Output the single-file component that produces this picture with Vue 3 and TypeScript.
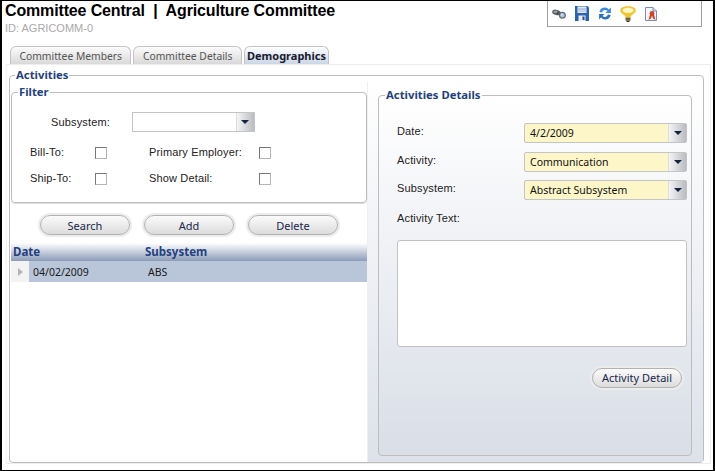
<template>
  <div class="window">
    <header class="header">
      <div class="titles">
        <h1>Committee Central&nbsp; |&nbsp; Agriculture Committee</h1>
        <p class="record-id">ID: AGRICOMM-0</p>
      </div>
      <div class="toolbar">
        <svg width="14" height="10" viewBox="0 0 14 10">
          <ellipse cx="4.5" cy="3.4" rx="4.4" ry="2.6" transform="rotate(14 4.5 3.4)" fill="#5c6066" />
          <ellipse cx="3.4" cy="2.8" rx="2" ry="1.1" fill="#a0a4aa" />
          <rect x="5" y="3.5" width="4" height="2.5" fill="#4c5056" />
          <circle cx="10.4" cy="6.2" r="3.5" fill="#666b71" />
          <circle cx="10.4" cy="6.2" r="2.2" fill="#a9c6e2" />
          <circle cx="9.8" cy="5.6" r="0.9" fill="#e0edf8" />
        </svg>
        <svg width="14" height="15" viewBox="0 0 14 15">
          <path d="M0 0 H12.5 L14 1.5 V15 H0 Z" fill="#2b62b4" />
          <rect x="2.5" y="0.5" width="9" height="6.5" fill="#e3e9f4" />
          <rect x="2.5" y="2.5" width="9" height="1" fill="#8da8d0" />
          <rect x="2.5" y="4.5" width="9" height="1" fill="#a8bcdc" />
          <rect x="3.5" y="9.5" width="7" height="5.5" fill="#e9edf2" />
          <rect x="7.5" y="10.5" width="2" height="3.5" fill="#2b4c80" />
        </svg>
        <svg width="14" height="15" viewBox="0 0 15 15">
          <path d="M1.5 6 A5.8 5.8 0 0 1 11.7 3.2 L13.8 1.2 V7 H8 L10.2 4.8 A3.4 3.4 0 0 0 4.4 6.4 Z" fill="#3b8ae0" />
          <path d="M13.5 9 A5.8 5.8 0 0 1 3.3 11.8 L1.2 13.8 V8 H7 L4.8 10.2 A3.4 3.4 0 0 0 10.6 8.6 Z" fill="#2a6fc4" />
        </svg>
        <svg width="16" height="16" viewBox="0 0 16 16">
          <path d="M8 0.3 C12.8 0.3 15.8 2 15.8 4.8 C15.8 7.6 10.8 8.6 10.4 11.5 H5.6 C5.2 8.6 0.2 7.6 0.2 4.8 C0.2 2 3.2 0.3 8 0.3 Z" fill="#f3c62b" />
          <ellipse cx="8" cy="4.4" rx="5.4" ry="2.6" fill="#fdf8cc" />
          <rect x="5.5" y="11.5" width="5" height="3.2" fill="#77653f" />
          <rect x="6.5" y="14.7" width="3" height="1.3" fill="#3d3424" />
        </svg>
        <svg width="12" height="14" viewBox="0 0 12 14">
          <path d="M0.5 0.5 H8 L11.5 4 V13.5 H0.5 Z" fill="#f4f6fa" stroke="#7b8db0" />
          <path d="M8 0.5 V4 H11.5" fill="#cfd8e8" stroke="#7b8db0" />
          <circle cx="7" cy="6.4" r="2.4" fill="#d8402a" />
          <path d="M5 7.5 L3.5 13 L6 11.6 L7 8.5 L8 11.6 L10.5 13 L9 7.5 Z" fill="#d8402a" />
        </svg>
      </div>
    </header>

    <nav class="tabs">
      <span v-for="tab in tabs" :key="tab" class="tab" :class="{ active: tab === 'Demographics' }">{{ tab }}</span>
    </nav>

    <section class="panel">
      <fieldset class="group activities">
        <legend>Activities</legend>
        <div class="columns">
          <div class="left">
            <fieldset class="group filter">
              <legend>Filter</legend>
              <div class="filter-body">
                <div class="filter-subsystem">
                  <label>Subsystem:</label>
                  <div class="combo empty"><span class="combo-value"></span><span class="combo-btn"><i></i></span></div>
                </div>
                <div class="checks">
                  <label>Bill-To:</label><span class="check"></span>
                  <label>Primary Employer:</label><span class="check"></span>
                  <label>Ship-To:</label><span class="check"></span>
                  <label>Show Detail:</label><span class="check"></span>
                </div>
              </div>
            </fieldset>

            <div class="actions">
              <button v-for="action in actions" :key="action" class="pill">{{ action }}</button>
            </div>

            <div class="grid-head">
              <span class="col-date">Date</span>
              <span>Subsystem</span>
            </div>
            <div class="grid-row">
              <span class="row-marker"><i></i></span>
              <span class="cell-date">04/02/2009</span>
              <span class="cell-sub">ABS</span>
            </div>
          </div>

          <div class="right">
            <fieldset class="group details">
              <legend>Activities Details</legend>
              <div class="details-body">
                <div class="form-row" v-for="field in fields" :key="field.label">
                  <label>{{ field.label }}</label>
                  <div class="combo required"><span class="combo-value">{{ field.value }}</span><span class="combo-btn"><i></i></span></div>
                </div>
                <label class="text-label">Activity Text:</label>
                <div class="text-box"></div>
                <div class="detail-action">
                  <button class="pill">Activity Detail</button>
                </div>
              </div>
            </fieldset>
          </div>
        </div>
      </fieldset>
    </section>
  </div>
</template>

<script setup lang="ts">
const tabs: string[] = ["Committee Members", "Committee Details", "Demographics"]
const actions: string[] = ["Search", "Add", "Delete"]

const fields = [
  { label: "Date:", value: "4/2/2009" },
  { label: "Activity:", value: "Communication" },
  { label: "Subsystem:", value: "Abstract Subsystem" },
]
</script>

<style>
html,
body {
  margin: 0;
  background: #fff;
}
</style>

<style scoped>
.window {
  box-sizing: border-box;
  width: 715px;
  height: 471px;
  display: flex;
  flex-direction: column;
  background: #fff;
  border: solid #000;
  border-width: 1px 2px 1px 2px;
  font-family: "Liberation Sans", Arial, sans-serif;
  font-size: 11px;
  letter-spacing: 0.15px;
  color: #222;
  overflow: hidden;
}

.header {
  height: 45px;
  display: flex;
  justify-content: space-between;
  align-items: flex-start;
  padding: 0 11px 0 3px;
  flex: none;
}

h1 {
  margin: 0;
  font-size: 16px;
  line-height: 19px;
  font-weight: bold;
  letter-spacing: -0.15px;
  color: #000;
}

.record-id {
  margin: 1px 0 0;
  font-size: 11px;
  line-height: 14px;
  letter-spacing: 0;
  color: #a9a9a9;
}

.toolbar {
  box-sizing: border-box;
  width: 155px;
  height: 26px;
  display: flex;
  align-items: center;
  gap: 8.75px;
  padding: 0 0 0 4px;
  border: 1px solid #a0a0a0;
  border-top: none;
}

.tabs {
  display: flex;
  gap: 2px;
  padding-left: 8px;
  height: 18px;
  flex: none;
}

.tab {
  box-sizing: border-box;
  height: 18px;
  padding: 0 8.5px;
  display: flex;
  align-items: center;
  border: 1px solid #c4c4c4;
  border-bottom: none;
  border-radius: 6px 6px 0 0;
  background: linear-gradient(#fbfbfb, #d9d9d9);
  font-family: "Noto Sans", sans-serif;
  font-size: 10.3px;
  letter-spacing: 0;
  color: #555;
}

.tab.active {
  padding: 0 2px;
  background: linear-gradient(#fff, #cbd6e6);
  font-size: 11px;
  font-weight: bold;
  color: #1a1a2e;
}

.panel {
  flex: 1;
  min-height: 0;
  margin: 0 2px 6px 4px;
  padding: 3px 0 0 2px;
  border: 1px solid #eee;
  display: flex;
}

.group {
  margin: 0;
  min-width: 0;
  padding: 0;
  border: 1px solid #bdbdbd;
  border-radius: 4px;
}

.group legend {
  margin-left: 5px;
  padding: 0 1px;
  font-family: "Noto Sans", sans-serif;
  font-size: 11.3px;
  line-height: 14px;
  font-weight: bold;
  letter-spacing: 0;
  color: #24417f;
}

.group .filter > legend,
.group .details > legend {
  margin-left: 6px;
}

.activities {
  flex: 1;
  margin: 0 6px 0 0;
  min-height: 0;
}

.columns {
  height: 100%;
  display: flex;
}

.left {
  width: 356px;
  padding: 3px 0 0 1px;
  flex: none;
}

.right {
  flex: 1;
  padding: 6px 11px 6px 10px;
  background: linear-gradient(#fff, #dde1ea);
  display: flex;
  border-left: 1px solid #efefef;
}

.filter {
  height: 118px;
  box-sizing: border-box;
  box-shadow: 0 1px 0 #dedede;
}

.filter-body {
  padding: 13px 0 0 18px;
}

.filter-subsystem {
  display: flex;
  align-items: center;
  padding-left: 21px;
  gap: 22px;
}

.combo {
  box-sizing: border-box;
  display: flex;
  border: 1px solid #c4c4c4;
  background: #fff;
}

.combo.empty {
  width: 123px;
  height: 20px;
}

.combo.required {
  flex: 1;
  height: 20px;
  background: #fdf6c9;
  border-radius: 2px;
}

.combo-value {
  flex: 1;
  padding-left: 5px;
  line-height: 18px;
  font-family: "Noto Sans", sans-serif;
  font-size: 10.5px;
  letter-spacing: 0;
  color: #111;
}

.combo-btn {
  width: 17px;
  display: flex;
  align-items: center;
  justify-content: center;
  background: linear-gradient(90deg, #f4f4f4, #b9bcc2);
  border-left: 1px solid #ddd;
}

.combo-btn i {
  width: 0;
  height: 0;
  border: 4px solid transparent;
  border-top: 4px solid #14233f;
  border-bottom: none;
}

.checks {
  margin-top: 14px;
  display: grid;
  grid-template-columns: 65px 54px 110px 12px;
  row-gap: 12px;
  align-items: center;
}

.checks label {
  margin-bottom: 2px;
}

.check {
  box-sizing: border-box;
  width: 12px;
  height: 12px;
  border: 1px solid #b5b5b5;
  border-top-color: #777;
  border-left-color: #777;
  background: #fff;
}

.actions {
  display: flex;
  gap: 14px;
  padding: 12px 0 8px 29px;
}

.pill {
  box-sizing: border-box;
  width: 90px;
  height: 20px;
  padding: 0;
  border: 1px solid #b2b2b2;
  border-radius: 10px;
  background: linear-gradient(#fbfbfb, #dcdcdc);
  box-shadow: 0 0 0 2px #ececec;
  font-family: "Noto Sans", sans-serif;
  font-size: 11px;
  color: #20284a;
}

.grid-head {
  box-sizing: border-box;
  height: 18px;
  padding-top: 1px;
  display: flex;
  align-items: flex-start;
  background: linear-gradient(#fff, #8c9cb8);
  font-family: "Noto Sans", sans-serif;
  font-size: 11.5px;
  line-height: 15px;
  font-weight: bold;
  letter-spacing: 0;
  color: #24417f;
}

.col-date {
  width: 132px;
  padding-left: 2px;
}

.grid-row {
  height: 21px;
  display: flex;
  align-items: center;
  background: #b9c5d9;
  font-family: "Noto Sans", sans-serif;
  font-size: 10.5px;
  letter-spacing: 0;
  color: #1a1a1a;
}

.row-marker {
  width: 18px;
  align-self: stretch;
  display: flex;
  align-items: center;
  justify-content: center;
  background: #f3f3f3;
}

.row-marker i {
  width: 0;
  height: 0;
  border: 4px solid transparent;
  border-left: 5px solid #b5b5b5;
  border-right: none;
}

.cell-date {
  width: 115px;
  padding-left: 4px;
}

.details {
  flex: 1;
  background: linear-gradient(#fff, #d9dee7);
}

.details-body {
  padding: 21px 4px 0 18px;
}

.form-row {
  height: 28.5px;
  display: flex;
}

.form-row label {
  width: 127px;
  padding-top: 2px;
}

.text-label {
  display: block;
  margin-top: 3px;
}

.text-box {
  box-sizing: border-box;
  height: 107px;
  margin-top: 16px;
  border: 1px solid #c2c2c2;
  border-radius: 3px;
  background: #fff;
}

.detail-action {
  display: flex;
  justify-content: flex-end;
  padding: 21px 5px 0 0;
}
</style>
